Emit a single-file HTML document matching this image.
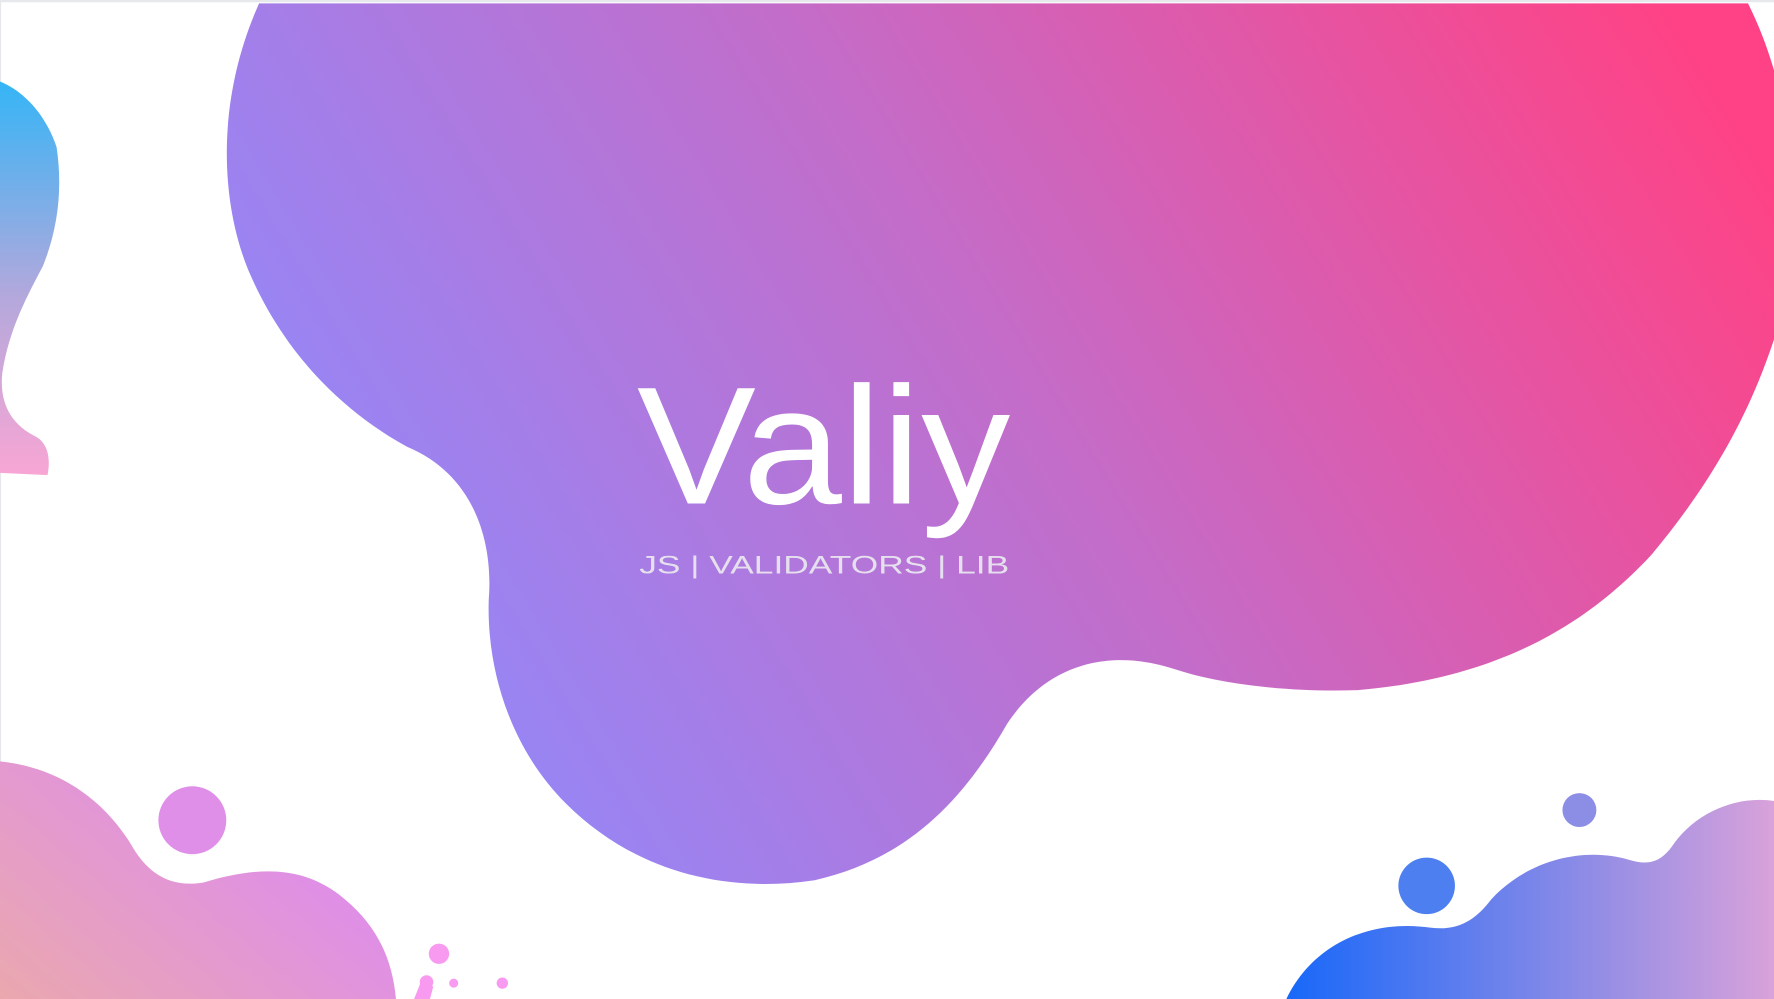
<!DOCTYPE html>
<html><head><meta charset="utf-8"><style>
html,body{margin:0;padding:0;background:#fff;overflow:hidden}
svg{display:block}
</style></head><body>
<svg width="1774" height="999" viewBox="0 0 1568 883" preserveAspectRatio="none" xmlns="http://www.w3.org/2000/svg">
<defs>
<linearGradient id="m" x1="0" y1="0.55" x2="1" y2="0.2">
<stop offset="0" stop-color="#9189fb"/><stop offset="0.5" stop-color="#c46cc8"/><stop offset="1" stop-color="#ff4285"/></linearGradient>
<linearGradient id="bl" x1="0" y1="1" x2="1" y2="0.3">
<stop offset="0" stop-color="#eaa8ae"/><stop offset="1" stop-color="#dc88f6"/></linearGradient>
<linearGradient id="br" x1="0" y1="0" x2="1" y2="0">
<stop offset="0" stop-color="#1868f9"/><stop offset="1" stop-color="#d9a2da"/></linearGradient>
<linearGradient id="lb" x1="0" y1="0" x2="0" y2="1">
<stop offset="0" stop-color="#35b5f6"/><stop offset="0.55" stop-color="#b4a8dc"/><stop offset="1" stop-color="#f8a6d4"/></linearGradient>
</defs>
<rect width="1568" height="883" fill="#fff"/>
<rect width="1568" height="2" fill="#e6e8ec"/>
<rect width="1" height="883" fill="#e6e8ec"/>
<path fill="url(#m)" d="M229 3 L1545 3 C1556 25 1563 45 1568 62 L1568 300 C1545 370 1510 430 1460 490 C1400 555 1320 600 1200 610 C1140 612 1080 605 1040 592 C990 575 930 580 890 640 C850 710 800 760 720 778 C640 790 560 770 500 710 C450 660 430 590 432 530 C436 480 420 420 360 395 C300 362 250 310 220 240 C195 180 190 90 229 3 Z"/>
<path fill="url(#lb)" d="M0 72 C20 80 40 100 50 130 C56 170 50 205 38 235 C25 260 8 290 2 330 C0 350 5 372 30 385 C45 392 44 410 42 420 L0 418 Z"/>
<path fill="url(#bl)" d="M0 673 C50 678 90 705 115 745 C130 772 150 785 180 780 C230 765 270 765 305 795 C335 820 347 850 350 883 L0 883 Z"/>
<circle cx="170" cy="725" r="30" fill="#df8fe8"/>
<circle cx="388" cy="843" r="9" fill="#f79af0"/>
<path d="M372 868 L366 883 L380 883 L383 872 Z" fill="#f79af0"/>
<circle cx="377" cy="868" r="6" fill="#f79af0"/>
<circle cx="401" cy="869" r="4" fill="#f79af0"/>
<circle cx="444" cy="869" r="5" fill="#f79af0"/>
<path fill="url(#br)" d="M1137 883 C1160 835 1210 812 1265 820 C1290 823 1305 812 1318 795 C1350 760 1400 748 1440 760 C1460 766 1470 760 1480 745 C1500 718 1535 703 1568 708 L1568 883 Z"/>
<circle cx="1261" cy="783" r="25" fill="#4e7ff0"/>
<circle cx="1396" cy="716" r="15" fill="#8c8ee6"/>
<text x="563" y="445" font-family="'Liberation Sans',sans-serif" font-size="148" fill="#fff" textLength="330" lengthAdjust="spacingAndGlyphs">Valiy</text>
<text x="565" y="507" font-family="'Liberation Sans',sans-serif" font-size="22" fill="#e6e0ee" textLength="327" lengthAdjust="spacingAndGlyphs">JS | VALIDATORS | LIB</text>
</svg>
</body></html>
